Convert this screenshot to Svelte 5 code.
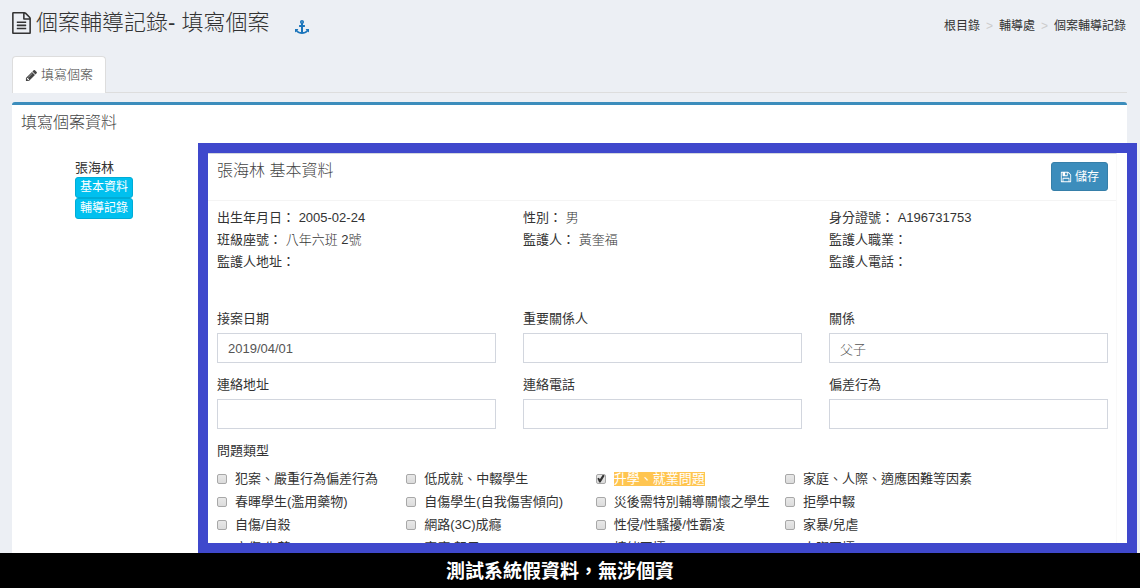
<script lang="ts">
  interface Problem {
    label: string;
    checked: boolean;
  }

  const crumbs = ['根目錄', '輔導處', '個案輔導記錄'];

  const info = [
    { label: '出生年月日', value: '2005-02-24' },
    { label: '性別', value: '男' },
    { label: '身分證號', value: 'A196731753' },
    { label: '班級座號', value: '八年六班 2號' },
    { label: '監護人', value: '黃奎福' },
    { label: '監護人職業', value: '' },
    { label: '監護人地址', value: '' },
    { label: '', value: '' },
    { label: '監護人電話', value: '' },
  ];

  let fields = $state([
    { id: 'open-date', label: '接案日期', value: '2019/04/01' },
    { id: 'contact', label: '重要關係人', value: '' },
    { id: 'relation', label: '關係', value: '父子' },
    { id: 'address', label: '連絡地址', value: '' },
    { id: 'phone', label: '連絡電話', value: '' },
    { id: 'behavior', label: '偏差行為', value: '' },
  ]);

  let problems: Problem[] = $state(
    [
      '犯案、嚴重行為偏差行為', '低成就、中輟學生', '升學、就業問題', '家庭、人際、適應困難等因素',
      '春暉學生(濫用藥物)', '自傷學生(自我傷害傾向)', '災後需特別輔導關懷之學生', '拒學中輟',
      '自傷/自殺', '網路(3C)成癮', '性侵/性騷擾/性霸凌', '家暴/兒虐',
      '哀傷/失落', '家庭/親子', '情緒困擾', '人際困擾',
    ].map((label) => ({ label, checked: label === '升學、就業問題' }))
  );
</script>

<div class="page">
  <main>
    <header class="top">
      <h1>
        <svg class="file" viewBox="0 0 1536 1792"><path d="M1468 380q28 28 48 76t20 88v1152q0 40-28 68t-68 28h-1344q-40 0-68-28t-28-68v-1600q0-40 28-68t68-28h896q40 0 88 20t76 48zm-444-244v376h376q-10-29-22-41l-313-313q-12-12-41-22zm384 1528v-1024h-416q-40 0-68-28t-28-68v-416h-768v1536h1280zm-1024-864q0-14 9-23t23-9h704q14 0 23 9t9 23v64q0 14-9 23t-23 9h-704q-14 0-23-9t-9-23v-64zm736 224q14 0 23 9t9 23v64q0 14-9 23t-23 9h-704q-14 0-23-9t-9-23v-64q0-14 9-23t23-9h704zm0 256q14 0 23 9t9 23v64q0 14-9 23t-23 9h-704q-14 0-23-9t-9-23v-64q0-14 9-23t23-9h704z" /></svg>
        個案輔導記錄- 填寫個案
      </h1>
      <a class="anchor" href="#top" aria-label="anchor">
        <svg viewBox="0 0 1792 1792"><path d="M960 256q0-26-19-45t-45-19-45 19-19 45 19 45 45 19 45-19 19-45zm832 928v352q0 22-20 30-8 2-12 2-12 0-23-9l-93-93q-119 143-318.500 226.500t-429.500 83.500-429.500-83.500-318.500-226.500l-93 93q-9 9-23 9-4 0-12-2-20-8-20-30v-352q0-14 9-23t23-9h352q22 0 30 20 8 19-7 35l-100 100q67 91 189.500 153.500t271.500 82.500v-647h-192q-26 0-45-19t-19-45v-128q0-26 19-45t45-19h192v-163q-58-34-93-92.500t-35-128.500q0-106 75-181t181-75 181 75 75 181q0 70-35 128.500t-93 92.500v163h192q26 0 45 19t19 45v128q0 26-19 45t-45 19h-192v647q149-20 271.500-82.500t189.500-153.500l-100-100q-15-16-7-35 8-20 30-20h352q14 0 23 9t9 23z" /></svg>
      </a>
      <nav class="crumbs">
        {#each crumbs as crumb, i (crumb)}
          {#if i > 0}<span class="sep">&gt;</span>{/if}
          <a href="#crumb">{crumb}</a>
        {/each}
      </nav>
    </header>

    <nav class="tabs">
      <a class="tab" href="#write">
        <svg viewBox="0 0 1792 1792"><path d="M491 1536l91-91-235-235-91 91v107h128v128h107zm523-928q0-22-22-22-10 0-17 7l-542 542q-7 7-7 17 0 22 22 22 10 0 17-7l542-542q7-7 7-17zm-54-192l416 416-832 832h-416v-416zm683 96q0 53-37 90l-166 166-416-416 166-165q36-38 90-38 53 0 91 38l235 234q37 39 37 91z" /></svg>
        填寫個案
      </a>
    </nav>

    <section class="box">
      <h2>填寫個案資料</h2>
      <div class="body">
        <aside>
          <span>張海林</span>
          <a class="tag" href="#basic">基本資料</a>
          <a class="tag" href="#record">輔導記錄</a>
        </aside>

        <div class="frame">
          <form class="panel" onsubmit={(e) => e.preventDefault()}>
            <header class="panel-head">
              <h2>張海林 基本資料</h2>
              <button class="save" type="submit">
                <svg viewBox="0 0 1792 1792"><path d="M512 1536h768v-384h-768v384zm896 0h128v-896q0-14-10-38.500t-20-34.500l-281-281q-10-10-34-20t-39-10v416q0 40-28 68t-68 28h-576q-40 0-68-28t-28-68v-416h-128v1280h128v-416q0-40 28-68t68-28h832q40 0 68 28t28 68v416zm-384-928v-320q0-13-9.500-22.500t-22.500-9.500h-192q-13 0-22.500 9.500t-9.500 22.500v320q0 13 9.500 22.500t22.500 9.500h192q13 0 22.500-9.500t9.500-22.500zm640 32v928q0 40-28 68t-68 28h-1344q-40 0-68-28t-28-68v-1344q0-40 28-68t68-28h928q40 0 88 20t76 48l280 280q28 28 48 76t20 88z" /></svg>
                儲存
              </button>
            </header>

            <div class="grid info">
              {#each info as item}
                <div>{#if item.label}{item.label}： <span class="value">{item.value}</span>{/if}</div>
              {/each}
            </div>

            <div class="grid fields">
              {#each fields as field (field.id)}
                <div class="field">
                  <label for={field.id}>{field.label}</label>
                  <input id={field.id} type="text" bind:value={field.value} />
                </div>
              {/each}
            </div>

            <fieldset>
              <legend>問題類型</legend>
              <div class="problems">
                {#each problems as problem (problem.label)}
                  <label>
                    <input type="checkbox" bind:checked={problem.checked} />
                    <span class:on={problem.checked}>{problem.label}</span>
                  </label>
                {/each}
              </div>
            </fieldset>
          </form>
        </div>
      </div>
    </section>
  </main>

  <footer>測試系統假資料，無涉個資</footer>
</div>

<style>
  :global(body) {
    margin: 0;
    background: #eceff4;
  }

  .page {
    height: 100vh;
    display: flex;
    flex-direction: column;
    font-family: "Liberation Sans", "Noto Sans CJK TC", sans-serif;
    font-size: 13px;
    line-height: 22px;
    color: #333;
  }

  .page * {
    box-sizing: border-box;
  }

  main {
    flex: 1;
    min-height: 0;
    display: flex;
    flex-direction: column;
    padding: 0 13px 0 12px;
  }

  a {
    color: inherit;
    text-decoration: none;
  }

  svg {
    fill: currentColor;
    flex-shrink: 0;
  }

  h1,
  h2 {
    margin: 0;
    font-weight: 300;
  }

  .top {
    display: flex;
    align-items: center;
    height: 46px;
    margin-bottom: 10px;
  }

  h1 {
    display: flex;
    align-items: center;
    gap: 5px;
    font-size: 22px;
    line-height: 32px;
  }

  .file {
    width: 19px;
    height: 22px;
  }

  .anchor {
    display: flex;
    margin: 8px 0 0 26px;
    color: #1b75bb;
  }

  .anchor svg {
    width: 14px;
    height: 14px;
  }

  .crumbs {
    display: flex;
    gap: 6px;
    margin: 6px 1px 0 auto;
    font-size: 12px;
  }

  .sep {
    color: #ccc;
  }

  .tabs {
    display: flex;
    border-bottom: 1px solid #ddd;
    margin-bottom: 9px;
  }

  .tab {
    display: flex;
    align-items: center;
    gap: 3px;
    height: 37px;
    margin-bottom: -1px;
    padding: 0 12px;
    border: 1px solid #ddd;
    border-bottom: 0;
    border-radius: 4px 4px 0 0;
    background: #fff;
    color: #444;
    font-weight: 300;
  }

  .tab svg {
    width: 13px;
    height: 13px;
  }

  .box {
    flex: 1;
    min-height: 0;
    display: flex;
    flex-direction: column;
    border-top: 3px solid #3c8dbc;
    border-radius: 3px 3px 0 0;
    background: #fff;
  }

  h2 {
    font-size: 16px;
    line-height: 18px;
    color: #444;
  }

  .box > h2 {
    padding: 9px 9px 11px;
  }

  .body {
    flex: 1;
    min-height: 0;
    display: flex;
  }

  aside {
    width: 186px;
    flex-shrink: 0;
    display: flex;
    flex-direction: column;
    align-items: flex-start;
    padding: 16px 0 0 63px;
    line-height: 18px;
  }

  .tag {
    padding: 0 4px;
    border: 1px solid #00acd6;
    border-radius: 3px;
    background: #00c0ef;
    color: #fff;
    font-size: 12px;
    line-height: 19px;
  }

  .frame {
    flex: 1;
    min-width: 0;
    overflow: hidden;
    margin-right: -10px;
    padding-right: 10px;
    border: 10px solid #3f48cc;
    background: #fff;
  }

  .panel {
    border-top: 1px solid #d2d6de;
    border-right: 1px solid #f9f9f9;
  }

  .panel-head {
    display: flex;
    justify-content: space-between;
    align-items: flex-start;
    padding: 8px 8px 9px 9px;
    border-bottom: 1px solid #f4f4f4;
  }

  .save {
    display: flex;
    align-items: center;
    gap: 3px;
    height: 29px;
    padding: 0 8px;
    border: 1px solid #367fa9;
    border-radius: 3px;
    background: #3c8dbc;
    color: #fff;
    font: inherit;
    font-size: 12px;
  }

  .save svg {
    width: 12px;
    height: 12px;
  }

  .grid {
    display: grid;
    grid-template-columns: repeat(3, 1fr);
    column-gap: 27px;
    padding: 0 8px 0 9px;
  }

  .info {
    padding-top: 6px;
    padding-bottom: 37px;
    grid-auto-rows: 22px;
  }

  .value {
    font-weight: 300;
  }

  .fields {
    row-gap: 13px;
  }

  .field {
    display: flex;
    flex-direction: column;
    gap: 5px;
  }

  .field label,
  legend {
    line-height: 18px;
  }

  .field input {
    width: 100%;
    height: 30px;
    padding: 0 10px;
    border: 1px solid #d2d6de;
    background: #fff;
    color: #555;
    font: inherit;
    font-weight: 300;
  }

  fieldset {
    margin: 0;
    padding: 13px 8px 0 9px;
    border: 0;
  }

  legend {
    float: left;
    width: 100%;
    padding: 0;
    margin-bottom: 7px;
  }

  .problems {
    clear: both;
    width: 85%;
    display: grid;
    grid-template-columns: repeat(4, 1fr);
    grid-auto-rows: 23px;
  }

  .problems label {
    display: flex;
    align-items: center;
    gap: 8px;
    white-space: nowrap;
  }

  .problems input {
    appearance: none;
    display: flex;
    width: 10px;
    height: 10px;
    margin: 0;
    border: 1px solid #a8a8a8;
    border-radius: 2px;
    background: linear-gradient(#e8e8e8, #dcdcdc);
  }

  .problems input:checked::after {
    content: "";
    width: 8px;
    height: 8px;
    background: #333;
    clip-path: polygon(8% 50%, 28% 40%, 40% 58%, 78% 0, 100% 16%, 48% 100%, 32% 100%);
  }

  .on {
    background: #ffc550;
    color: #fff;
    line-height: 14px;
  }

  footer {
    flex-shrink: 0;
    padding: 2px 20px 0 0;
    background: #000;
    color: #fff;
    font-size: 19px;
    font-weight: 700;
    line-height: 33px;
    text-align: center;
  }
</style>
